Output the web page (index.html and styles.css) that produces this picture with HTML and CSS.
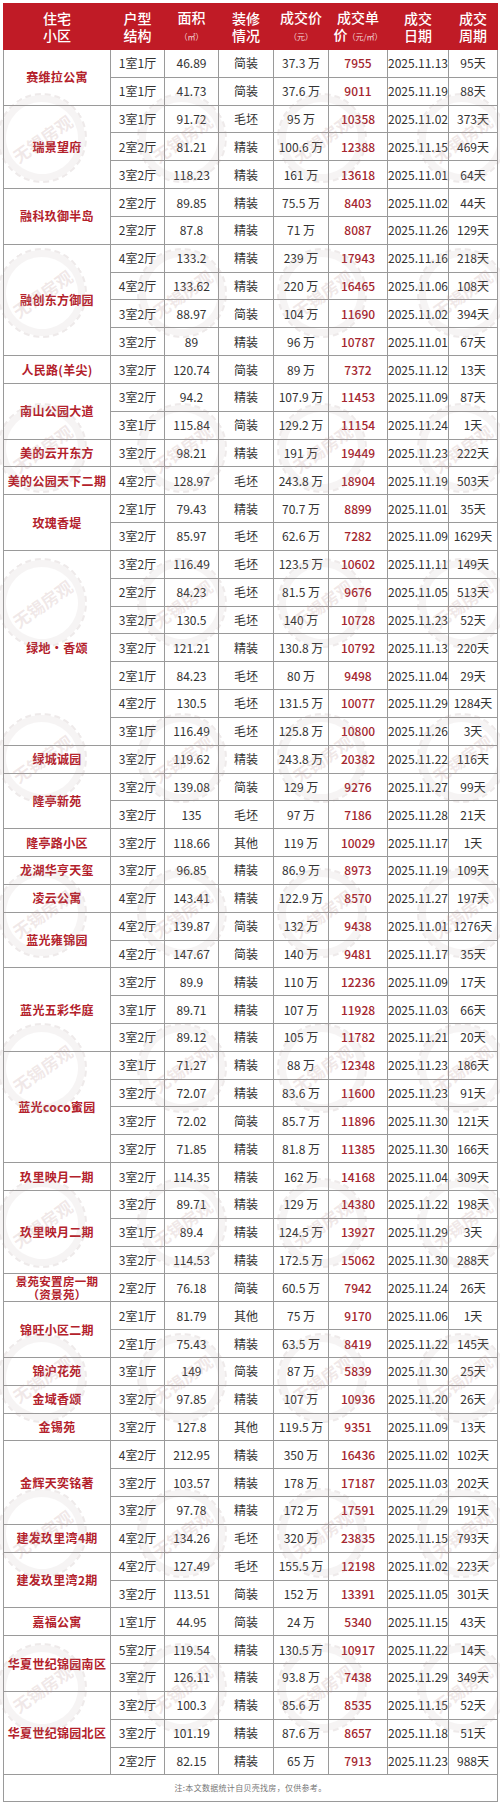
FILE: index.html
```html
<!DOCTYPE html>
<html lang="zh-CN">
<head>
<meta charset="utf-8">
<title>成交数据</title>
<link rel="stylesheet" href="styles.css">
</head>
<body>
<div class="page">
<table class="deals">
<colgroup>
<col class="c1"><col class="c2"><col class="c3"><col class="c4"><col class="c5"><col class="c6"><col class="c7"><col class="c8">
</colgroup>
<thead>
<tr>
<th>住宅<br>小区</th>
<th>户型<br>结构</th>
<th>面积<br><span class="unit">（㎡）</span></th>
<th>装修<br>情况</th>
<th>成交价<br><span class="unit">（元）</span></th>
<th>成交单<br>价<span class="unit">（元/㎡）</span></th>
<th>成交<br>日期</th>
<th>成交<br>周期</th>
</tr>
</thead>
<tbody>
<tr><td class="name" rowspan="2">赛维拉公寓</td><td>1室1厅</td><td>46.89</td><td>简装</td><td>37.3 万</td><td class="up">7955</td><td>2025.11.13</td><td>95天</td></tr>
<tr><td>1室1厅</td><td>41.73</td><td>简装</td><td>37.6 万</td><td class="up">9011</td><td>2025.11.19</td><td>88天</td></tr>

<tr><td class="name" rowspan="3">瑞景望府</td><td>3室1厅</td><td>91.72</td><td>毛坯</td><td>95 万</td><td class="up">10358</td><td>2025.11.02</td><td>373天</td></tr>
<tr><td>2室2厅</td><td>81.21</td><td>精装</td><td>100.6 万</td><td class="up">12388</td><td>2025.11.15</td><td>469天</td></tr>
<tr><td>3室2厅</td><td>118.23</td><td>精装</td><td>161 万</td><td class="up">13618</td><td>2025.11.01</td><td>64天</td></tr>

<tr><td class="name" rowspan="2">融科玖御半岛</td><td>2室2厅</td><td>89.85</td><td>精装</td><td>75.5 万</td><td class="up">8403</td><td>2025.11.02</td><td>44天</td></tr>
<tr><td>2室2厅</td><td>87.8</td><td>精装</td><td>71 万</td><td class="up">8087</td><td>2025.11.26</td><td>129天</td></tr>

<tr><td class="name" rowspan="4">融创东方御园</td><td>4室2厅</td><td>133.2</td><td>精装</td><td>239 万</td><td class="up">17943</td><td>2025.11.16</td><td>218天</td></tr>
<tr><td>4室2厅</td><td>133.62</td><td>精装</td><td>220 万</td><td class="up">16465</td><td>2025.11.06</td><td>108天</td></tr>
<tr><td>3室2厅</td><td>88.97</td><td>简装</td><td>104 万</td><td class="up">11690</td><td>2025.11.02</td><td>394天</td></tr>
<tr><td>3室2厅</td><td>89</td><td>精装</td><td>96 万</td><td class="up">10787</td><td>2025.11.01</td><td>67天</td></tr>

<tr><td class="name">人民路(羊尖)</td><td>3室2厅</td><td>120.74</td><td>简装</td><td>89 万</td><td class="up">7372</td><td>2025.11.12</td><td>13天</td></tr>

<tr><td class="name" rowspan="2">南山公园大道</td><td>3室2厅</td><td>94.2</td><td>精装</td><td>107.9 万</td><td class="up">11453</td><td>2025.11.09</td><td>87天</td></tr>
<tr><td>3室1厅</td><td>115.84</td><td>简装</td><td>129.2 万</td><td class="up">11154</td><td>2025.11.24</td><td>1天</td></tr>

<tr><td class="name">美的云开东方</td><td>3室2厅</td><td>98.21</td><td>精装</td><td>191 万</td><td class="up">19449</td><td>2025.11.23</td><td>222天</td></tr>
<tr><td class="name">美的公园天下二期</td><td>4室2厅</td><td>128.97</td><td>毛坯</td><td>243.8 万</td><td class="up">18904</td><td>2025.11.19</td><td>503天</td></tr>

<tr><td class="name" rowspan="2">玫瑰香堤</td><td>2室1厅</td><td>79.43</td><td>精装</td><td>70.7 万</td><td class="up">8899</td><td>2025.11.01</td><td>35天</td></tr>
<tr><td>3室2厅</td><td>85.97</td><td>毛坯</td><td>62.6 万</td><td class="up">7282</td><td>2025.11.09</td><td>1629天</td></tr>

<tr><td class="name" rowspan="7">绿地·香颂</td><td>3室2厅</td><td>116.49</td><td>毛坯</td><td>123.5 万</td><td class="up">10602</td><td>2025.11.11</td><td>149天</td></tr>
<tr><td>2室2厅</td><td>84.23</td><td>毛坯</td><td>81.5 万</td><td class="up">9676</td><td>2025.11.05</td><td>513天</td></tr>
<tr><td>3室2厅</td><td>130.5</td><td>毛坯</td><td>140 万</td><td class="up">10728</td><td>2025.11.23</td><td>52天</td></tr>
<tr><td>3室2厅</td><td>121.21</td><td>精装</td><td>130.8 万</td><td class="up">10792</td><td>2025.11.13</td><td>220天</td></tr>
<tr><td>2室1厅</td><td>84.23</td><td>毛坯</td><td>80 万</td><td class="up">9498</td><td>2025.11.04</td><td>29天</td></tr>
<tr><td>4室2厅</td><td>130.5</td><td>毛坯</td><td>131.5 万</td><td class="up">10077</td><td>2025.11.29</td><td>1284天</td></tr>
<tr><td>3室1厅</td><td>116.49</td><td>毛坯</td><td>125.8 万</td><td class="up">10800</td><td>2025.11.26</td><td>3天</td></tr>

<tr><td class="name">绿城诚园</td><td>3室2厅</td><td>119.62</td><td>精装</td><td>243.8 万</td><td class="up">20382</td><td>2025.11.22</td><td>116天</td></tr>

<tr><td class="name" rowspan="2">隆亭新苑</td><td>3室2厅</td><td>139.08</td><td>简装</td><td>129 万</td><td class="up">9276</td><td>2025.11.27</td><td>99天</td></tr>
<tr><td>3室2厅</td><td>135</td><td>毛坯</td><td>97 万</td><td class="up">7186</td><td>2025.11.28</td><td>21天</td></tr>

<tr><td class="name">隆亭路小区</td><td>3室2厅</td><td>118.66</td><td>其他</td><td>119 万</td><td class="up">10029</td><td>2025.11.17</td><td>1天</td></tr>
<tr><td class="name">龙湖华亨天玺</td><td>3室2厅</td><td>96.85</td><td>精装</td><td>86.9 万</td><td class="up">8973</td><td>2025.11.19</td><td>109天</td></tr>
<tr><td class="name">凌云公寓</td><td>4室2厅</td><td>143.41</td><td>精装</td><td>122.9 万</td><td class="up">8570</td><td>2025.11.27</td><td>197天</td></tr>

<tr><td class="name" rowspan="2">蓝光雍锦园</td><td>4室2厅</td><td>139.87</td><td>简装</td><td>132 万</td><td class="up">9438</td><td>2025.11.01</td><td>1276天</td></tr>
<tr><td>4室2厅</td><td>147.67</td><td>简装</td><td>140 万</td><td class="up">9481</td><td>2025.11.17</td><td>35天</td></tr>

<tr><td class="name" rowspan="3">蓝光五彩华庭</td><td>3室2厅</td><td>89.9</td><td>精装</td><td>110 万</td><td class="up">12236</td><td>2025.11.09</td><td>17天</td></tr>
<tr><td>3室1厅</td><td>89.71</td><td>精装</td><td>107 万</td><td class="up">11928</td><td>2025.11.03</td><td>66天</td></tr>
<tr><td>3室2厅</td><td>89.12</td><td>精装</td><td>105 万</td><td class="up">11782</td><td>2025.11.21</td><td>20天</td></tr>

<tr><td class="name" rowspan="4">蓝光coco蜜园</td><td>3室1厅</td><td>71.27</td><td>精装</td><td>88 万</td><td class="up">12348</td><td>2025.11.23</td><td>186天</td></tr>
<tr><td>3室2厅</td><td>72.07</td><td>精装</td><td>83.6 万</td><td class="up">11600</td><td>2025.11.23</td><td>91天</td></tr>
<tr><td>3室2厅</td><td>72.02</td><td>简装</td><td>85.7 万</td><td class="up">11896</td><td>2025.11.30</td><td>121天</td></tr>
<tr><td>3室2厅</td><td>71.85</td><td>精装</td><td>81.8 万</td><td class="up">11385</td><td>2025.11.30</td><td>166天</td></tr>

<tr><td class="name">玖里映月一期</td><td>3室2厅</td><td>114.35</td><td>精装</td><td>162 万</td><td class="up">14168</td><td>2025.11.04</td><td>309天</td></tr>

<tr><td class="name" rowspan="3">玖里映月二期</td><td>3室2厅</td><td>89.71</td><td>精装</td><td>129 万</td><td class="up">14380</td><td>2025.11.22</td><td>198天</td></tr>
<tr><td>3室1厅</td><td>89.4</td><td>精装</td><td>124.5 万</td><td class="up">13927</td><td>2025.11.29</td><td>3天</td></tr>
<tr><td>3室2厅</td><td>114.53</td><td>精装</td><td>172.5 万</td><td class="up">15062</td><td>2025.11.30</td><td>288天</td></tr>

<tr><td class="name two">景苑安置房一期<br>（资景苑）</td><td>2室2厅</td><td>76.18</td><td>简装</td><td>60.5 万</td><td class="up">7942</td><td>2025.11.24</td><td>26天</td></tr>

<tr><td class="name" rowspan="2">锦旺小区二期</td><td>2室1厅</td><td>81.79</td><td>其他</td><td>75 万</td><td class="up">9170</td><td>2025.11.06</td><td>1天</td></tr>
<tr><td>2室1厅</td><td>75.43</td><td>精装</td><td>63.5 万</td><td class="up">8419</td><td>2025.11.22</td><td>145天</td></tr>

<tr><td class="name">锦沪花苑</td><td>3室1厅</td><td>149</td><td>简装</td><td>87 万</td><td class="up">5839</td><td>2025.11.30</td><td>25天</td></tr>
<tr><td class="name">金域香颂</td><td>3室2厅</td><td>97.85</td><td>精装</td><td>107 万</td><td class="up">10936</td><td>2025.11.20</td><td>26天</td></tr>
<tr><td class="name">金锡苑</td><td>3室2厅</td><td>127.8</td><td>其他</td><td>119.5 万</td><td class="up">9351</td><td>2025.11.09</td><td>13天</td></tr>

<tr><td class="name" rowspan="3">金辉天奕铭著</td><td>4室2厅</td><td>212.95</td><td>精装</td><td>350 万</td><td class="up">16436</td><td>2025.11.02</td><td>102天</td></tr>
<tr><td>3室2厅</td><td>103.57</td><td>精装</td><td>178 万</td><td class="up">17187</td><td>2025.11.03</td><td>202天</td></tr>
<tr><td>3室2厅</td><td>97.78</td><td>精装</td><td>172 万</td><td class="up">17591</td><td>2025.11.29</td><td>191天</td></tr>

<tr><td class="name">建发玖里湾4期</td><td>4室2厅</td><td>134.26</td><td>毛坯</td><td>320 万</td><td class="up">23835</td><td>2025.11.15</td><td>793天</td></tr>

<tr><td class="name" rowspan="2">建发玖里湾2期</td><td>4室2厅</td><td>127.49</td><td>毛坯</td><td>155.5 万</td><td class="up">12198</td><td>2025.11.02</td><td>223天</td></tr>
<tr><td>3室2厅</td><td>113.51</td><td>简装</td><td>152 万</td><td class="up">13391</td><td>2025.11.05</td><td>301天</td></tr>

<tr><td class="name">嘉福公寓</td><td>1室1厅</td><td>44.95</td><td>简装</td><td>24 万</td><td class="up">5340</td><td>2025.11.15</td><td>43天</td></tr>

<tr><td class="name" rowspan="2">华夏世纪锦园南区</td><td>5室2厅</td><td>119.54</td><td>精装</td><td>130.5 万</td><td class="up">10917</td><td>2025.11.22</td><td>14天</td></tr>
<tr><td>3室2厅</td><td>126.11</td><td>精装</td><td>93.8 万</td><td class="up">7438</td><td>2025.11.29</td><td>349天</td></tr>

<tr><td class="name" rowspan="3">华夏世纪锦园北区</td><td>3室2厅</td><td>100.3</td><td>精装</td><td>85.6 万</td><td class="up">8535</td><td>2025.11.15</td><td>52天</td></tr>
<tr><td>3室2厅</td><td>101.19</td><td>精装</td><td>87.6 万</td><td class="up">8657</td><td>2025.11.18</td><td>51天</td></tr>
<tr><td>2室2厅</td><td>82.15</td><td>精装</td><td>65 万</td><td class="up">7913</td><td>2025.11.23</td><td>988天</td></tr>
</tbody>
<tfoot>
<tr><td class="note" colspan="8">注:本文数据统计自贝壳找房，仅供参考。</td></tr>
</tfoot>
</table>

<div class="wm-layer" aria-hidden="true">
<div class="wm"><span>无锡房观</span></div><div class="wm"><span>无锡房观</span></div><div class="wm"><span>无锡房观</span></div><div class="wm"><span>无锡房观</span></div>
<div class="wm"><span>无锡房观</span></div><div class="wm"><span>无锡房观</span></div><div class="wm"><span>无锡房观</span></div><div class="wm"><span>无锡房观</span></div>
<div class="wm"><span>无锡房观</span></div><div class="wm"><span>无锡房观</span></div><div class="wm"><span>无锡房观</span></div><div class="wm"><span>无锡房观</span></div>
<div class="wm"><span>无锡房观</span></div><div class="wm"><span>无锡房观</span></div><div class="wm"><span>无锡房观</span></div><div class="wm"><span>无锡房观</span></div>
<div class="wm"><span>无锡房观</span></div><div class="wm"><span>无锡房观</span></div><div class="wm"><span>无锡房观</span></div><div class="wm"><span>无锡房观</span></div>
<div class="wm"><span>无锡房观</span></div><div class="wm"><span>无锡房观</span></div><div class="wm"><span>无锡房观</span></div><div class="wm"><span>无锡房观</span></div>
<div class="wm"><span>无锡房观</span></div><div class="wm"><span>无锡房观</span></div><div class="wm"><span>无锡房观</span></div><div class="wm"><span>无锡房观</span></div>
<div class="wm"><span>无锡房观</span></div><div class="wm"><span>无锡房观</span></div><div class="wm"><span>无锡房观</span></div><div class="wm"><span>无锡房观</span></div>
<div class="wm"><span>无锡房观</span></div><div class="wm"><span>无锡房观</span></div><div class="wm"><span>无锡房观</span></div><div class="wm"><span>无锡房观</span></div>
<div class="wm"><span>无锡房观</span></div><div class="wm"><span>无锡房观</span></div><div class="wm"><span>无锡房观</span></div><div class="wm"><span>无锡房观</span></div>
<div class="wm"><span>无锡房观</span></div><div class="wm"><span>无锡房观</span></div><div class="wm"><span>无锡房观</span></div><div class="wm"><span>无锡房观</span></div>
</div>
</div>
</body>
</html>
```

FILE: styles.css
```css
html, body {
  margin: 0;
  padding: 0;
  background: #ffffff;
}

body {
  font-family: "Noto Sans CJK SC", "Noto Sans", sans-serif;
  color: #333333;
}

.page {
  position: relative;
  width: 500px;
  padding: 3px 3px 3px 3px;
  box-sizing: border-box;
  overflow: hidden;
}

.deals {
  width: 494px;
  table-layout: fixed;
  border-collapse: collapse;
  border: 1px solid #6f6f6f;
  position: relative;
  z-index: 1;
}

.c1 { width: 107px; }
.c2 { width: 54px; }
.c3 { width: 54px; }
.c4 { width: 55px; }
.c5 { width: 55px; }
.c6 { width: 59px; }
.c7 { width: 61px; }
.c8 { width: 49px; }

.deals th {
  background: #c01b26;
  color: #ffffff;
  font-weight: 500;
  font-size: 14px;
  line-height: 17px;
  height: 45px;
  padding: 0;
  text-align: center;
  vertical-align: middle;
  border: 1px solid #c01b26;
  white-space: nowrap;
}

.deals th .unit {
  font-size: 8px;
  color: #f3d6d6;
  font-weight: 400;
}

.deals td {
  height: 26.84px;
  padding: 0;
  text-align: center;
  vertical-align: middle;
  border: 1px solid #9a9a9a;
  font-size: 12px;
  line-height: 14px;
  white-space: nowrap;
  color: #333333;
}

.deals td.name {
  color: #b3212b;
  font-weight: 700;
  font-size: 12px;
  letter-spacing: 0.3px;
}

.deals td.name.two {
  font-size: 11.5px;
  line-height: 13px;
}

.deals td.up {
  color: #a4252e;
  font-weight: 500;
}

.deals td.note {
  height: 26px;
  font-size: 8px;
  color: #777777;
  letter-spacing: 0.3px;
}

.wm-layer {
  position: absolute;
  top: 0;
  bottom: 0;
  left: -28px;
  width: 560px;
  display: grid;
  grid-template-columns: repeat(4, 140px);
  grid-auto-rows: 155px;
  padding-top: 60px;
  pointer-events: none;
  z-index: 2;
  overflow: hidden;
}

.wm {
  display: flex;
  align-items: center;
  justify-content: center;
}

.wm span {
  width: 86px;
  height: 86px;
  border-radius: 50%;
  border: 2px dashed rgba(170, 150, 150, 0.2);
  box-shadow: inset 0 0 0 7px rgba(170, 150, 150, 0.1);
  display: flex;
  align-items: center;
  justify-content: center;
  transform: rotate(-35deg);
  color: rgba(190, 150, 150, 0.22);
  font-size: 17px;
  font-weight: 700;
  white-space: nowrap;
}
```
